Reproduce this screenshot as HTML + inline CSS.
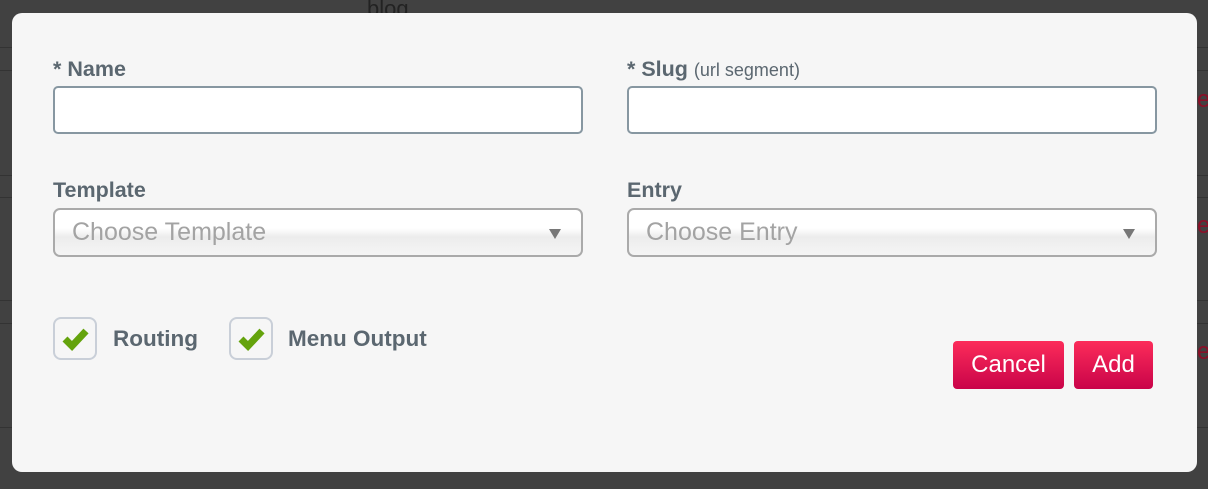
<!DOCTYPE html>
<html><head><style>
body{margin:0;width:1208px;height:489px;background:#414141;position:relative;overflow:hidden;font-family:"Liberation Sans",sans-serif}
.ln{position:absolute;left:0;width:1208px;height:1px;background:#333}
.e{position:absolute;left:1197px;color:#8a1028;font-size:24px}
.modal{position:absolute;left:12px;top:13px;width:1185px;height:459px;background:#f6f6f6;border-radius:10px}
.lbl{position:absolute;font-weight:bold;font-size:21.5px;color:#5b6770}
.lbl small{font-weight:normal;font-size:18px}
.inp{position:absolute;border:2px solid #8797a1;border-radius:5px;background:#fff;box-sizing:border-box;width:530px;height:48px}
.sel{position:absolute;width:530px;height:49px;border:2px solid #aaa;border-radius:7px;box-sizing:border-box;background:linear-gradient(#fff 0%,#fff 40%,#ececec 60%,#f5f5f5 100%);color:#a3a3a3;font-size:25px;padding:8px 0 0 17px}
.sel:after{content:"";position:absolute;right:20px;top:19px;border-left:6px solid transparent;border-right:6px solid transparent;border-top:10px solid #777}
.cb{position:absolute;top:304px;border:2px solid #c9cfd8;border-radius:8px;box-sizing:border-box;width:44px;height:43px}
.cbl{position:absolute;top:313px;font-weight:bold;font-size:22.5px;color:#5b6770}
.btn{position:absolute;top:328px;height:48px;border-radius:4px;background:linear-gradient(#fc2c5a,#c90349);color:#fff;font-size:24px;text-align:center;line-height:47px}
</style></head><body>
<div class="ln" style="top:47px"></div><div class="ln" style="top:70px"></div>
<div class="ln" style="top:175px"></div><div class="ln" style="top:197px"></div>
<div class="ln" style="top:300px"></div><div class="ln" style="top:323px"></div>
<div class="ln" style="top:427px"></div>
<div class="e" style="top:86px">e</div><div class="e" style="top:212px">e</div><div class="e" style="top:338px">e</div>
<div style="position:absolute;left:367px;top:-4px;font-size:22px;color:#222">blog</div>
<div class="modal">
<div class="lbl" style="left:41px;top:44px">* Name</div>
<div class="lbl" style="left:615px;top:44px">* Slug <small>(url segment)</small></div>
<div class="inp" style="left:41px;top:73px"></div>
<div class="inp" style="left:615px;top:73px"></div>
<div class="lbl" style="left:41px;top:165px">Template</div>
<div class="lbl" style="left:615px;top:165px">Entry</div>
<div class="sel" style="left:41px;top:195px">Choose Template</div>
<div class="sel" style="left:615px;top:195px">Choose Entry</div>
<div class="cb" style="left:41px"><svg width="40" height="40" viewBox="0 0 40 40" style="position:absolute;left:0;top:0"><path d="M10 20 L17 27 L31 12" fill="none" stroke="#64a30c" stroke-width="7"/></svg></div>
<div class="cbl" style="left:101px">Routing</div>
<div class="cb" style="left:217px"><svg width="40" height="40" viewBox="0 0 40 40" style="position:absolute;left:0;top:0"><path d="M10 20 L17 27 L31 12" fill="none" stroke="#64a30c" stroke-width="7"/></svg></div>
<div class="cbl" style="left:276px">Menu Output</div>
<div class="btn" style="left:941px;width:111px">Cancel</div>
<div class="btn" style="left:1062px;width:79px">Add</div>
</div>
</body></html>
